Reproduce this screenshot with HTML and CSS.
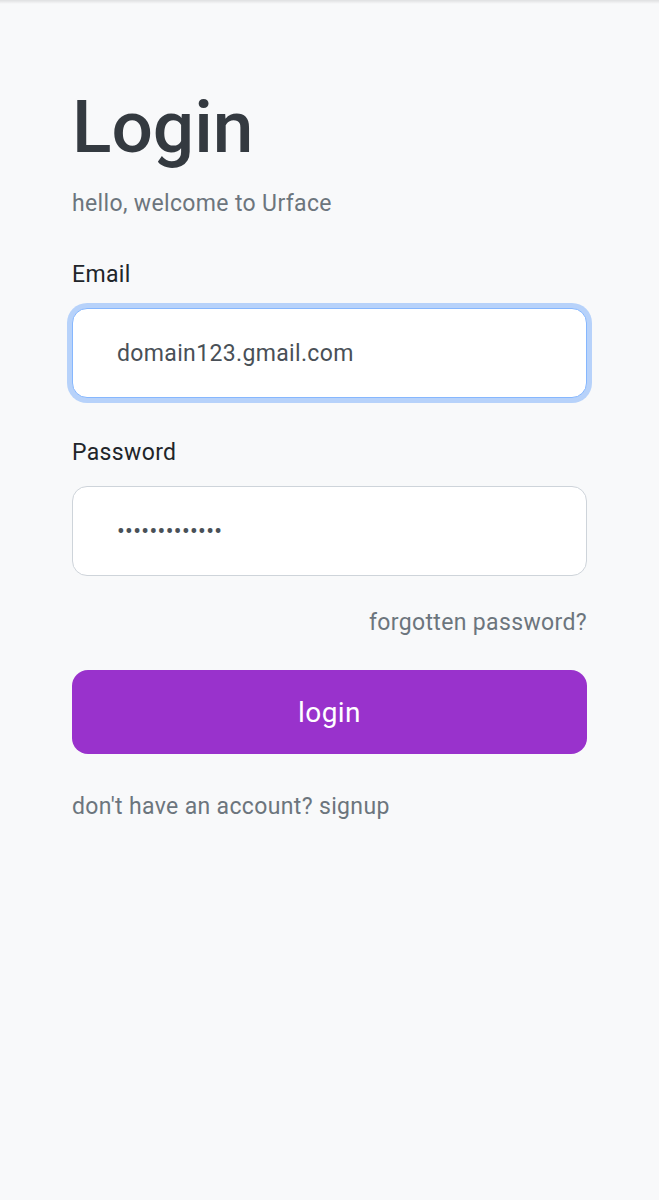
FILE: index.html
```html
<!DOCTYPE html>
<html lang="en">
<head>
<meta charset="utf-8">
<title>Login</title>
<link rel="stylesheet" href="styles.css">
</head>
<body>
<div class="topbar"></div>
<main class="page">
  <h1 class="title">Login</h1>
  <p class="subtitle">hello, welcome to Urface</p>
  <form class="form">
    <label class="label" for="email">Email</label>
    <input class="field is-focused" id="email" type="text" value="domain123.gmail.com">
    <label class="label label-pw" for="pw">Password</label>
    <input class="field" id="pw" type="password" value="abcdefghijklm">
    <div class="forgot-row"><a class="muted-link" href="#">forgotten password?</a></div>
    <button class="btn" type="button">login</button>
  </form>
  <p class="signup">don't have an account? signup</p>
</main>
</body>
</html>
```

FILE: styles.css
```css
html, body {
  margin: 0;
  padding: 0;
  background: #f8f9fa;
  font-family: Roboto, "Liberation Sans", sans-serif;
}

.topbar {
  height: 4px;
  background: linear-gradient(to bottom, rgba(0,0,0,0.10), rgba(0,0,0,0));
}

.page {
  padding: 79px 72px 0 72px;
}

.title {
  margin: 0;
  font-size: 73px;
  line-height: 88px;
  font-weight: 500;
  color: #343a40;
}

.subtitle {
  margin: 16px 0 0 0;
  font-size: 23px;
  line-height: 33px;
  letter-spacing: 0.35px;
  color: #6c757d;
}

.form {
  display: flex;
  flex-direction: column;
  margin-top: 38px;
}

.label {
  font-size: 23px;
  line-height: 33px;
  letter-spacing: 0.35px;
  color: #212529;
  margin-bottom: 17px;
}

.label-pw {
  margin-top: 38px;
}

.field {
  box-sizing: border-box;
  height: 90px;
  width: 100%;
  padding: 0 44px;
  border: 1.5px solid #ced4da;
  border-radius: 15px;
  background: #fff;
  font-family: Roboto, "Liberation Sans", sans-serif;
  font-size: 23px;
  letter-spacing: 0.35px;
  color: #495057;
  outline: none;
}

.field.is-focused {
  border-color: #86b7fe;
  box-shadow: 0 0 0 5px rgba(13,110,253,0.28);
}

.forgot-row {
  display: flex;
  justify-content: flex-end;
  margin-top: 30px;
}

.muted-link {
  font-size: 23px;
  line-height: 33px;
  letter-spacing: 0.35px;
  color: #6c757d;
  text-decoration: none;
}

.btn {
  margin-top: 31px;
  height: 84px;
  border: none;
  border-radius: 16px;
  background: #9932cc;
  color: #fff;
  font-family: Roboto, "Liberation Sans", sans-serif;
  font-size: 28px;
  letter-spacing: 0.4px;
}

.signup {
  margin: 36px 0 0 0;
  font-size: 23px;
  line-height: 33px;
  letter-spacing: 0.35px;
  color: #6c757d;
}
```
